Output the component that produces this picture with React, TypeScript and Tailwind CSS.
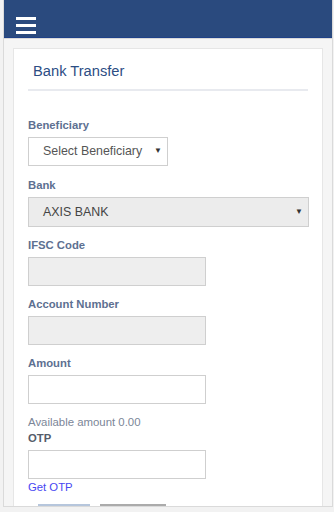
import { useState } from 'react';

const font = { fontFamily: '"Liberation Sans", Arial, sans-serif' };

function Label({ children, dark }: { children: React.ReactNode; dark?: boolean }) {
  return (
    <div
      className={`h-4 leading-4 text-[11.3px] font-bold mb-1 ${dark ? 'text-[#555d6a]' : 'text-[#5d7091]'}`}
    >
      {children}
    </div>
  );
}

function TextBox({ disabled }: { disabled?: boolean }) {
  return (
    <input
      disabled={disabled}
      className={`block w-[178px] h-[29px] border border-[#cfcfcf] outline-none px-2 text-[12.4px] ${
        disabled ? 'bg-[#eeeeee]' : 'bg-white'
      }`}
    />
  );
}

export default function App() {
  const [amount, setAmount] = useState('');

  return (
    <div className="w-[334px] h-[512px] bg-[#f2f2f2] overflow-hidden" style={font}>
      <div className="ml-[3px] w-[330px] h-[507px] border-l border-r border-b border-[#dadada] bg-[#f5f5f5] overflow-hidden flex flex-col">
        {/* Header */}
        <div className="h-[38px] shrink-0 bg-[#2a4a7e] border-b border-[#1f4188] flex items-end pl-[12px] pb-[3px]">
          <button className="flex flex-col gap-[4px] w-5">
            <span className="block h-[3px] w-5 bg-white" />
            <span className="block h-[3px] w-5 bg-white" />
            <span className="block h-[3px] w-5 bg-white" />
          </button>
        </div>
        <div className="h-px bg-[#d9d9d9] shrink-0" />

        {/* Card */}
        <div className="px-[9px] pt-[9px]">
          <div className="bg-white border border-[#e6e6e6] px-[14px] pt-[12px] pb-6">
            <h1 className="h-5 leading-5 text-[14.7px] text-[#2c4d84] pl-[5px]">Bank Transfer</h1>
            <div className="mt-2 h-[2px] bg-[#e8eaef]" />

            <div className="mt-[26px]">
              <Label>Beneficiary</Label>
              <div className="relative w-[140px] h-[29px] border border-[#cfcfcf] bg-white flex items-center pl-[14px] text-[12.4px] text-[#555]">
                Select Beneficiary
                <span className="absolute right-[5px] top-[7px] text-[8px] text-[#333]">▼</span>
              </div>
            </div>

            <div className="mt-[11px]">
              <Label>Bank</Label>
              <div className="relative w-[281px] h-[30px] border border-[#cfcfcf] bg-[#ececec] flex items-center pl-[14px] text-[12.4px] text-[#444]">
                AXIS BANK
                <span className="absolute right-[5px] top-[8px] text-[8px] text-[#333]">▼</span>
              </div>
            </div>

            <div className="mt-[10px]">
              <Label>IFSC Code</Label>
              <TextBox disabled />
            </div>

            <div className="mt-[10px]">
              <Label>Account Number</Label>
              <TextBox disabled />
            </div>

            <div className="mt-[10px]">
              <Label>Amount</Label>
              <input
                value={amount}
                onChange={(e) => setAmount(e.target.value)}
                className="block mt-px w-[178px] h-[29px] border border-[#cfcfcf] outline-none px-2 text-[12.4px] bg-white"
              />
            </div>

            <div className="mt-[10px] h-4 leading-4 text-[11.4px] text-[#7b8698]">Available amount 0.00</div>

            <div>
              <Label dark>OTP</Label>
              <TextBox />
              <a href="#" className="block h-4 leading-4 text-[11.3px] text-[#4747f2]">
                Get OTP
              </a>
            </div>

            <div className="mt-[9px] flex gap-[10px] pl-[10px]">
              <button className="w-[52px] h-[30px] bg-[#b6c6dc]" />
              <button className="w-[66px] h-[30px] bg-[#ababab]" />
            </div>
          </div>
        </div>
      </div>
    </div>
  );
}
